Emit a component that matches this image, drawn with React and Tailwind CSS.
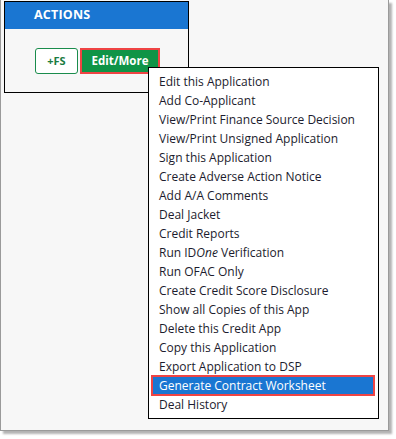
import React from 'react';

const items = [
    'Edit this Application',
    'Add Co-Applicant',
    'View/Print Finance Source Decision',
    'View/Print Unsigned Application',
    'Sign this Application',
    'Create Adverse Action Notice',
    'Add A/A Comments',
    'Deal Jacket',
    'Credit Reports',
    'IDONE',
    'Run OFAC Only',
    'Create Credit Score Disclosure',
    'Show all Copies of this App',
    'Delete this Credit App',
    'Copy this Application',
    'Export Application to DSP',
    'Generate Contract Worksheet',
    'Deal History',
];

const App = () => {
    return (
        <div className="w-[396px] h-[439px] bg-white" style={{ fontFamily: '"Open Sans", "Noto Sans", sans-serif' }}>
            <div className="relative w-[389px] h-[431px] bg-[#f7f7f7] border-l border-r border-b border-[#9a9a9a] shadow-[3px_3px_2px_rgba(0,0,0,0.3)]">
                {/* Actions panel */}
                <div className="ml-[3px] pt-[1px]">
                    <div className="w-[185px] h-[92px] border border-black flex flex-col">
                        <div className="h-[27px] bg-[#1a76d2] flex items-center pl-[29px]">
                            <span className="text-white font-bold text-[12.5px] tracking-[0.2px]">ACTIONS</span>
                        </div>
                        <div className="flex gap-[2px] pl-[30px] pt-[19px]">
                            <button className="w-[43px] h-[26px] bg-white border border-[#1a8c4c] rounded-[3px] text-[#1a7c42] font-bold text-[11px] flex items-center justify-center">
                                +FS
                            </button>
                            <button className="w-[80px] h-[26px] bg-[#0f9447] border-2 border-[#ef4444] text-white font-bold text-[11.5px] flex items-center justify-center">
                                Edit/More
                            </button>
                        </div>
                    </div>
                </div>

                {/* Dropdown menu */}
                <div className="absolute left-[147px] top-[67px] w-[231px] h-[352px] bg-white border border-black pt-[4px] pl-[3px] pr-[4px]">
                    {items.map(item => {
                        const active = item === 'Generate Contract Worksheet';
                        return (
                            <div
                                key={item}
                                className={`h-[19px] flex items-center text-[12px] leading-none ${active ? 'bg-[#1a76d2] text-white outline-2 outline-[#ef4444] -outline-offset-1 pl-[7px]' : 'text-[#1c1c2e] pl-[7px]'}`}
                            >
                                {item === 'IDONE' ? (
                                    <span>Run ID<i>One</i> Verification</span>
                                ) : item}
                            </div>
                        );
                    })}
                </div>
            </div>
        </div>
    );
};

export default App;
